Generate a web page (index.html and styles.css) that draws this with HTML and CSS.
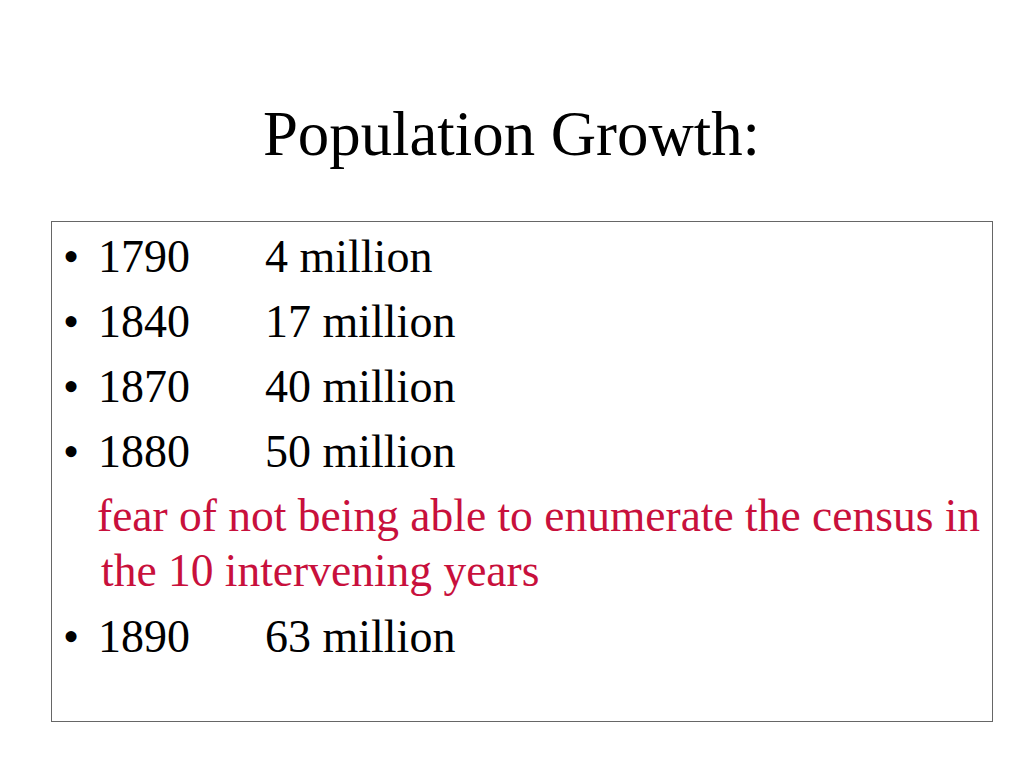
FILE: index.html
```html
<!DOCTYPE html>
<html lang="en">
<head>
<meta charset="utf-8">
<title>Population Growth</title>
<link rel="stylesheet" href="styles.css">
</head>
<body>
<div class="slide">
  <h1 class="title">Population Growth:</h1>
  <div class="box">
    <div class="row"><span class="bullet">•</span><span class="year">1790</span><span class="value">4 million</span></div>
    <div class="row"><span class="bullet">•</span><span class="year">1840</span><span class="value">17 million</span></div>
    <div class="row"><span class="bullet">•</span><span class="year">1870</span><span class="value">40 million</span></div>
    <div class="row"><span class="bullet">•</span><span class="year">1880</span><span class="value">50 million</span></div>
    <p class="note">fear of not being able to enumerate the census in<br>the 10 intervening years</p>
    <div class="row"><span class="bullet">•</span><span class="year">1890</span><span class="value">63 million</span></div>
  </div>
</div>
</body>
</html>
```
FILE: styles.css
```css
html, body {
  margin: 0;
  padding: 0;
  background: #ffffff;
}
body {
  font-family: "Liberation Serif", "Times New Roman", Times, Tinos, "DejaVu Serif", serif;
  color: #000000;
}
.slide {
  width: 1024px;
  height: 768px;
  overflow: hidden;
  padding-top: 99px;
  box-sizing: border-box;
}
.title {
  margin: 0;
  font-family: "Liberation Serif", "Times New Roman", Times, Tinos, "DejaVu Serif", serif;
  font-weight: normal;
  font-size: 62.8px;
  line-height: 70px;
  text-align: center;
  padding-right: 1px;
}
.box {
  box-sizing: border-box;
  margin: 52px 0 0 51px;
  width: 942px;
  height: 501px;
  border: 1px solid #666666;
  padding-top: 2px;
}
.row {
  display: grid;
  grid-template-columns: 35px 167px auto;
  padding-left: 11px;
  font-size: 46px;
  line-height: 65px;
}
.note {
  margin: 4px 0 6px 0;
  padding-left: 49px;
  text-indent: -4px;
  font-size: 45.5px;
  line-height: 55px;
  color: #c8103c;
  white-space: nowrap;
}
```
